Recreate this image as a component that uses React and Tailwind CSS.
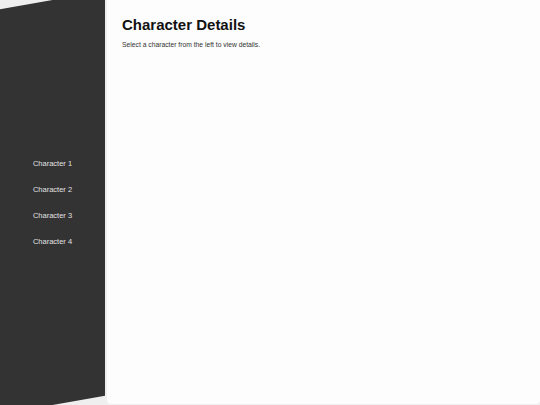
import React from 'react';

const CHARACTERS = ['Character 1', 'Character 2', 'Character 3', 'Character 4'];

export default function App() {
  return (
    <div
      className="flex h-screen w-full overflow-hidden bg-[#efefef]"
      style={{ fontFamily: '"Liberation Sans", Arial, sans-serif' }}
    >
      {/* Skewed sidebar */}
      <aside className="w-[105px] shrink-0 h-full bg-[#333333] -skew-y-10">
        <nav className="h-full flex flex-col justify-center items-center skew-y-10">
          {CHARACTERS.map((c) => (
            <div key={c} className="leading-[26px] text-[7.5px] text-[#e2e2e2] cursor-pointer">
              {c}
            </div>
          ))}
        </nav>
      </aside>

      <main className="flex-1 ml-[2px] mb-px rounded-b-[4px] bg-[#fdfdfd] pl-[15px] pt-[16px]">
        <h1 className="text-[15px] leading-[18px] font-bold text-[#111]">Character Details</h1>
        <p className="mt-[7px] text-[6.75px] leading-[8px] text-[#333]">
          Select a character from the left to view details.
        </p>
      </main>
    </div>
  );
}
